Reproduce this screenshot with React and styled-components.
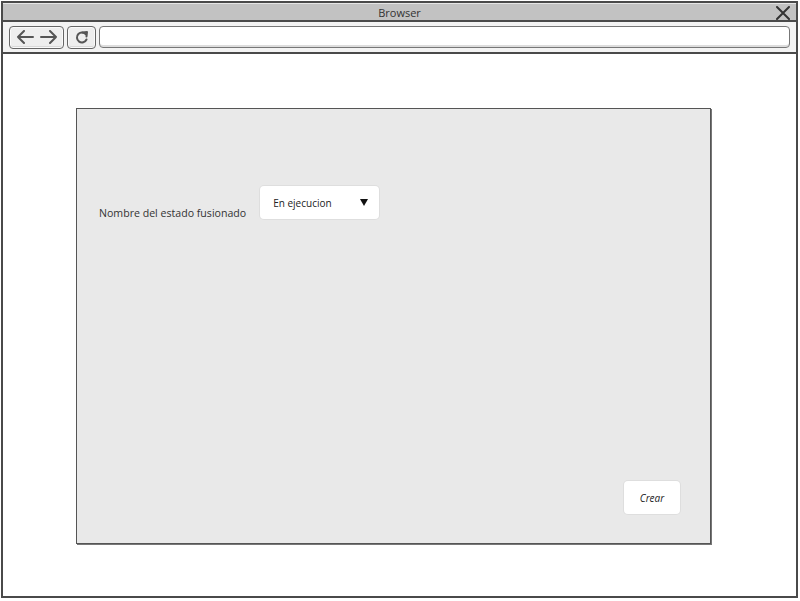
import React from "react";
import styled, { createGlobalStyle } from "styled-components";

const Global = createGlobalStyle`
  html, body { margin: 0; padding: 0; background: #fff; }
  body { font-family: "Open Sans", "DejaVu Sans", sans-serif; }
  * { box-sizing: border-box; }
`;

const Frame = styled.div`
  margin: 1px 0 0 1px;
  width: 797px;
  height: 597px;
  border: 2px solid #4a4a4a;
  display: flex;
  flex-direction: column;
  background: #fff;
`;

const TitleBar = styled.div`
  height: 19px;
  background: #c2c2c2;
  border-top: 1px solid #e6e6e6;
  border-bottom: 2px solid #4a4a4a;
  display: flex;
  align-items: center;
  justify-content: center;
  position: relative;
  font-size: 11px;
  color: #333;
`;

const Close = styled.svg`
  position: absolute;
  right: 6px;
  top: 2px;
`;

const Toolbar = styled.div`
  height: 32px;
  background: #f3f3f3;
  border-bottom: 2px solid #4a4a4a;
  display: flex;
  align-items: center;
  padding: 0 6px 0 6px;
  gap: 3px;
`;

const NavButton = styled.div`
  width: ${(p) => p.$w}px;
  height: 23px;
  border: 1.5px solid #666;
  border-radius: 4px;
  background: #eeeeee;
  box-shadow: inset 0 0 0 1px #fafafa, inset 0 -2px 0 #d8d8d8;
  display: flex;
  align-items: center;
  justify-content: center;
  gap: 6px;
`;

const Address = styled.div`
  flex: 1;
  height: 22px;
  border: 1.5px solid #777;
  border-radius: 4px;
  background: #fff;
  box-shadow: inset 0 -2px 0 #ddd;
`;

const Content = styled.div`
  flex: 1;
  padding: 54px 85px 52px 73px;
  display: flex;
`;

const Panel = styled.div`
  flex: 1;
  background: #e9e9e9;
  border: 1px solid #555;
  box-shadow: 1px 1px 0 #777;
  display: flex;
  flex-direction: column;
  padding: 77px 30px 29px 22px;
`;

const Row = styled.div`
  display: flex;
  align-items: flex-end;
  gap: 14px;
`;

const Label = styled.span`
  font-size: 10.6px;
  color: #333;
  line-height: 14px;
  margin-bottom: -1px;
`;

const Select = styled.div`
  width: 119px;
  height: 33px;
  background: #fff;
  border-radius: 4px;
  box-shadow: 0 0 0 1px #dedede;
  display: flex;
  align-items: center;
  justify-content: space-between;
  padding: 0 11px 0 13px;
  font-size: 10px;
  color: #222;
`;

const Footer = styled.div`
  margin-top: auto;
  display: flex;
  justify-content: flex-end;
`;

const Button = styled.div`
  width: 56px;
  height: 33px;
  background: #fff;
  border-radius: 4px;
  box-shadow: 0 0 0 1px #dedede;
  display: flex;
  align-items: center;
  justify-content: center;
  font-size: 10px;
  font-style: italic;
  color: #222;
`;

const Arrow = ({ dir }) => (
  <svg width="18" height="14" viewBox="0 0 18 14">
    {dir === "left" ? (
      <path d="M17 7 H2 M8 1 L2 7 L8 13" fill="none" stroke="#555" strokeWidth="2" strokeLinecap="round" strokeLinejoin="round" />
    ) : (
      <path d="M1 7 H16 M10 1 L16 7 L10 13" fill="none" stroke="#555" strokeWidth="2" strokeLinecap="round" strokeLinejoin="round" />
    )}
  </svg>
);

export default function App() {
  return (
    <>
      <Global />
      <Frame>
        <TitleBar>
          Browser
          <Close width="14" height="14" viewBox="0 0 14 14">
            <path d="M1 1 L13 13 M13 1 L1 13" stroke="#333" strokeWidth="2" strokeLinecap="round" />
          </Close>
        </TitleBar>
        <Toolbar>
          <NavButton $w={55}>
            <Arrow dir="left" />
            <Arrow dir="right" />
          </NavButton>
          <NavButton $w={29}>
            <svg width="14" height="14" viewBox="0 0 14 14">
              <path d="M11 4.5 A5 5 0 1 0 11.5 9.5" fill="none" stroke="#555" strokeWidth="2" strokeLinecap="round" />
              <path d="M7.5 2.5 L12 2 L11.5 6.5" fill="none" stroke="#555" strokeWidth="2" strokeLinecap="round" strokeLinejoin="round" />
            </svg>
          </NavButton>
          <Address />
        </Toolbar>
        <Content>
          <Panel>
            <Row>
              <Label>Nombre del estado fusionado</Label>
              <Select>
                <span>En ejecucion</span>
                <svg width="8" height="7" viewBox="0 0 8 7">
                  <path d="M0 0 H8 L4 7 Z" fill="#111" />
                </svg>
              </Select>
            </Row>
            <Footer>
              <Button>Crear</Button>
            </Footer>
          </Panel>
        </Content>
      </Frame>
    </>
  );
}
